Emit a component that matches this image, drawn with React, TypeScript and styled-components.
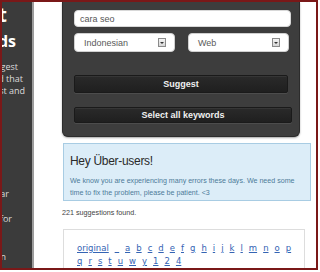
import React from "react";
import styled, { createGlobalStyle } from "styled-components";

const GlobalStyle = createGlobalStyle`
  html, body { margin: 0; padding: 0; background: #ffffff; }
  body { width: 320px; height: 272px; overflow: hidden; }
  * { box-sizing: border-box; }
`;

const Frame = styled.div`
  width: 318px;
  height: 270px;
  border: 2px solid #7a1818;
  display: flex;
  overflow: hidden;
  background: #ffffff;
`;

const Sidebar = styled.aside`
  width: 32px;
  flex-shrink: 0;
  background: #3b3b3b;
  border-right: 2px solid #9c9c9c;
  display: flex;
  flex-direction: column;
  overflow: hidden;
  color: #f2f2f2;
  font-family: "Open Sans", "DejaVu Sans", sans-serif;
`;

const SideLine = styled.div<{ $inset: number; $top: number; $size: number; $bold?: boolean }>`
  display: flex;
  justify-content: flex-end;
  white-space: nowrap;
  padding-right: ${(p) => p.$inset}px;
  margin-top: ${(p) => p.$top}px;
  font-size: ${(p) => p.$size}px;
  line-height: ${(p) => Math.round(p.$size * 1.3)}px;
  font-weight: ${(p) => (p.$bold ? 700 : 400)};
  color: ${(p) => (p.$bold ? "#ffffff" : "#dcdcdc")};
  & > span { flex-shrink: 0; }
`;

const Main = styled.main`
  flex: 1;
  padding-left: 28px;
  display: flex;
  flex-direction: column;
  align-items: flex-start;
`;

const Panel = styled.section`
  width: 238px;
  background: #3d3d3d;
  border: 1px solid #2c2c2c;
  border-top: none;
  border-radius: 0 0 6px 6px;
  box-shadow: 0 1px 2px rgba(0, 0, 0, 0.35);
  padding: 8px 0 13px 11px;
  display: flex;
  flex-direction: column;
  align-items: flex-start;
  font-family: "Liberation Sans", Arial, sans-serif;
`;

const TextInput = styled.div`
  width: 217px;
  height: 17px;
  background: #ffffff;
  border: 1px solid #d8d8d8;
  border-radius: 4px;
  padding-left: 5px;
  display: flex;
  align-items: center;
  font-size: 9px;
  color: #555555;
`;

const SelectRow = styled.div`
  margin-top: 6px;
  display: flex;
  gap: 13px;
`;

const Select = styled.div`
  width: 101px;
  height: 19px;
  background: #ffffff;
  border: 1px solid #d0d0d0;
  border-radius: 4px;
  padding: 0 8px 0 9px;
  display: flex;
  align-items: center;
  justify-content: space-between;
  font-size: 9px;
  color: #5a5a5a;
`;

const Arrow = styled.span`
  width: 8px;
  height: 9px;
  border: 1px solid #8a8a8a;
  background: linear-gradient(#f4f4f4, #d6d6d6);
  display: flex;
  align-items: center;
  justify-content: center;
  &::after {
    content: "";
    border-left: 2px solid transparent;
    border-right: 2px solid transparent;
    border-top: 2px solid #333;
  }
`;

const Button = styled.div<{ $width: number; $height: number; $top: number }>`
  width: ${(p) => p.$width}px;
  height: ${(p) => p.$height}px;
  margin-top: ${(p) => p.$top}px;
  background: linear-gradient(#2a2a2a, #1f1f1f);
  border: 1px solid #1a1a1a;
  box-shadow: inset 0 1px 0 rgba(255, 255, 255, 0.06), 0 1px 0 rgba(255, 255, 255, 0.08);
  border-radius: 2px;
  display: flex;
  align-items: center;
  justify-content: center;
  color: #f0f0f0;
  font-weight: 700;
  font-size: 9px;
`;

const InfoBox = styled.section`
  margin-top: 6px;
  margin-left: 1px;
  width: 248px;
  height: 61px;
  background: #dcedf8;
  border: 1px solid #a8cce3;
  padding: 8px 6px 0 6px;
`;

const InfoTitle = styled.h2`
  margin: 0;
  font-family: "Liberation Sans", Arial, sans-serif;
  font-weight: 400;
  font-size: 12px;
  letter-spacing: -0.3px;
  line-height: 18px;
  color: #2a2a2a;
`;

const InfoText = styled.p`
  margin: 5px 0 0 0;
  font-family: "Liberation Sans", Arial, sans-serif;
  font-size: 7.1px;
  line-height: 12px;
  color: #4d7b98;
`;

const Count = styled.p`
  margin: 6px 0 0 0;
  font-family: "Liberation Sans", Arial, sans-serif;
  font-size: 7.2px;
  line-height: 12px;
  color: #444444;
`;

const Results = styled.section`
  margin-top: 10px;
  margin-left: 1px;
  width: 242px;
  flex: 1;
  border: 1px solid #dddddd;
  border-bottom: none;
  padding: 12px 0 0 13px;
  font-family: "DejaVu Sans", Verdana, sans-serif;
  font-size: 8.5px;
  line-height: 13px;
`;

const LinkRow = styled.div`
  white-space: nowrap;
`;

const Letter = styled.a`
  display: inline-block;
  margin-right: 6px;
  color: #3464b4;
  text-decoration: underline;
`;

const letters1 = ["original", "_", "a", "b", "c", "d", "e", "f", "g", "h", "i", "j", "k", "l", "m", "n", "o", "p"];
const letters2 = ["q", "r", "s", "t", "u", "w", "y", "1", "2", "4"];

export default function App() {
  return (
    <>
      <GlobalStyle />
      <Frame>
        <Sidebar>
          <SideLine $inset={25} $top={0} $size={20} $bold>
            <span>Ubersuggest</span>
          </SideLine>
          <SideLine $inset={16} $top={3} $size={16} $bold>
            <span>keywords</span>
          </SideLine>
          <SideLine $inset={14} $top={9} $size={9}>
            <span>Suggest</span>
          </SideLine>
          <SideLine $inset={9} $top={0} $size={9}>
            <span>world that</span>
          </SideLine>
          <SideLine $inset={7} $top={0} $size={9}>
            <span>fast and</span>
          </SideLine>
          <SideLine $inset={23} $top={91} $size={9}>
            <span>similar</span>
          </SideLine>
          <SideLine $inset={20} $top={13} $size={9}>
            <span>for</span>
          </SideLine>
          <SideLine $inset={26} $top={26} $size={9}>
            <span>on</span>
          </SideLine>
        </Sidebar>
        <Main>
          <Panel>
            <TextInput>cara seo</TextInput>
            <SelectRow>
              <Select>
                Indonesian
                <Arrow />
              </Select>
              <Select>
                Web
                <Arrow />
              </Select>
            </SelectRow>
            <Button $width={214} $height={18} $top={23}>
              Suggest
            </Button>
            <Button $width={218} $height={16} $top={14}>
              Select all keywords
            </Button>
          </Panel>
          <InfoBox>
            <InfoTitle>Hey Über-users!</InfoTitle>
            <InfoText>
              We know you are experiencing many errors these days. We need some time to fix the problem, please be
              patient. &lt;3
            </InfoText>
          </InfoBox>
          <Count>221 suggestions found.</Count>
          <Results>
            <LinkRow>
              {letters1.map((l) => (
                <Letter key={l} href="#">
                  {l}
                </Letter>
              ))}
            </LinkRow>
            <LinkRow>
              {letters2.map((l) => (
                <Letter key={l} href="#">
                  {l}
                </Letter>
              ))}
            </LinkRow>
          </Results>
        </Main>
      </Frame>
    </>
  );
}
